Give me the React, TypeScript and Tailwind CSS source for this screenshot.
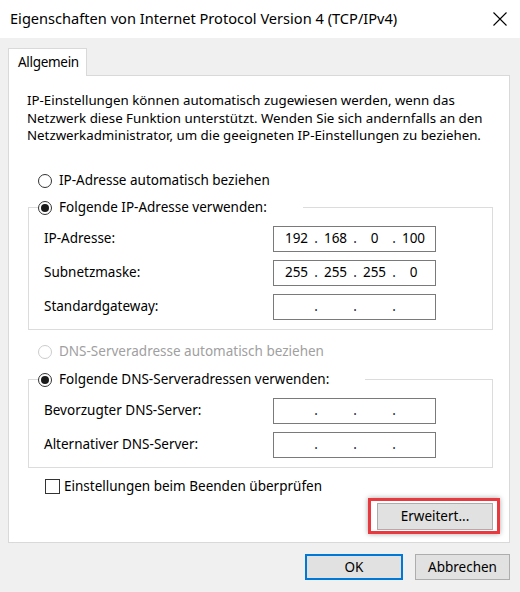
import { Fragment } from "react";

function Radio({
  label,
  checked = false,
  disabled = false,
}: {
  label: string;
  checked?: boolean;
  disabled?: boolean;
}) {
  return (
    <div
      className={`flex h-[18px] items-center whitespace-nowrap ${
        disabled ? "text-[#a0a0a0]" : "text-black"
      }`}
    >
      <span
        className={`flex h-[14px] w-[14px] items-center justify-center rounded-full border bg-white ${
          disabled ? "border-[#cccccc]" : "border-[#333333]"
        }`}
      >
        {checked && <span className="h-[8px] w-[8px] rounded-full bg-[#1a1a1a]" />}
      </span>
      <span className="ml-[7px]">{label}</span>
    </div>
  );
}

function IpField({ value }: { value?: string[] }) {
  return (
    <div className="flex h-[26px] w-[163px] items-center border border-[#7a7a7a] bg-white pl-[5px]">
      {[0, 1, 2, 3].map((i) => (
        <Fragment key={i}>
          <span className="w-[35px] text-center">{value?.[i] ?? ""}</span>
          {i < 3 && <span className="w-[4px] text-center text-[#1b1b3a]">.</span>}
        </Fragment>
      ))}
    </div>
  );
}

function Row({ label, value }: { label: string; value?: string[] }) {
  return (
    <div className="flex items-center justify-between">
      <span>{label}</span>
      <IpField value={value} />
    </div>
  );
}

export default function App() {
  return (
    <div className="flex h-[592px] w-[520px] flex-col bg-[#f0f0f0] font-['Noto_Sans',sans-serif] text-[13.5px] text-black">
      {/* title bar */}
      <div className="flex h-[38px] items-center justify-between bg-white pl-[10px] pr-[13px]">
        <span className="text-[14.6px]">Eigenschaften von Internet Protocol Version 4 (TCP/IPv4)</span>
        <svg width="14" height="14" viewBox="0 0 14 14" className="text-black">
          <path d="M0.5 0.5 L13.5 13.5 M13.5 0.5 L0.5 13.5" stroke="currentColor" strokeWidth="1.1" />
        </svg>
      </div>

      <div className="flex flex-1 flex-col pl-[8px] pr-[10px] pt-[10px]">
        {/* tab */}
        <div className="relative z-10 -mb-px flex h-[28px] w-[79px] items-center border border-b-0 border-[#d9d9d9] bg-white pl-[9px] tracking-[-0.3px]">
          Allgemein
        </div>

        {/* tab panel */}
        <div className="flex h-[468px] flex-col border border-[#d9d9d9] bg-white pl-[19px] pr-[16px] pt-[16px]">
          <p className="-ml-[1px] whitespace-nowrap text-[13.3px] leading-[17.5px]">
            IP-Einstellungen können automatisch zugewiesen werden, wenn das
            <br />
            Netzwerk diese Funktion unterstützt. Wenden Sie sich andernfalls an den
            <br />
            Netzwerkadministrator, um die geeigneten IP-Einstellungen zu beziehen.
          </p>

          <div className="ml-[10px] mt-[27px]">
            <Radio label="IP-Adresse automatisch beziehen" />
          </div>

          <fieldset className="mt-[9px] border border-[#dcdcdc] p-0">
            <legend className="ml-[9px] bg-white pr-[36px]">
              <Radio label="Folgende IP-Adresse verwenden:" checked />
            </legend>
            <div className="flex flex-col gap-[8px] pb-[9px] pl-[15px] pr-[56px] pt-[9px]">
              <Row label="IP-Adresse:" value={["192", "168", "0", "100"]} />
              <Row label="Subnetzmaske:" value={["255", "255", "255", "0"]} />
              <Row label="Standardgateway:" />
            </div>
          </fieldset>

          <div className="ml-[10px] mt-[13px]">
            <Radio label="DNS-Serveradresse automatisch beziehen" disabled />
          </div>

          <fieldset className="mt-[10px] border border-[#dcdcdc] p-0">
            <legend className="ml-[9px] bg-white pr-[36px]">
              <Radio label="Folgende DNS-Serveradressen verwenden:" checked />
            </legend>
            <div className="flex flex-col gap-[8px] pb-[9px] pl-[15px] pr-[56px] pt-[9px]">
              <Row label="Bevorzugter DNS-Server:" />
              <Row label="Alternativer DNS-Server:" />
            </div>
          </fieldset>

          <div className="ml-[17px] mt-[10px] flex h-[18px] items-center">
            <span className="h-[15px] w-[15px] border border-[#333333] bg-white" />
            <span className="ml-[4px]">Einstellungen beim Beenden überprüfen</span>
          </div>

          <div className="-mr-[7px] mt-[2px] flex justify-end">
            <div className="border-[3px] border-[#e8393f] pb-[1px] pl-[6px] pr-[4px] pt-[2px] shadow-[0_0_5px_rgba(0,0,0,0.35)]">
              <button className="flex h-[27px] w-[116px] items-center justify-center border border-[#adadad] bg-[#e1e1e1]">
                Erweitert...
              </button>
            </div>
          </div>
        </div>

        {/* dialog buttons */}
        <div className="mt-[11px] flex justify-end gap-[12px]">
          <button className="flex h-[26px] w-[98px] items-center justify-center border-2 border-[#0078d7] bg-[#e1e1e1]">
            OK
          </button>
          <button className="flex h-[26px] w-[95px] items-center justify-center border border-[#adadad] bg-[#e1e1e1]">
            Abbrechen
          </button>
        </div>
      </div>
    </div>
  );
}
